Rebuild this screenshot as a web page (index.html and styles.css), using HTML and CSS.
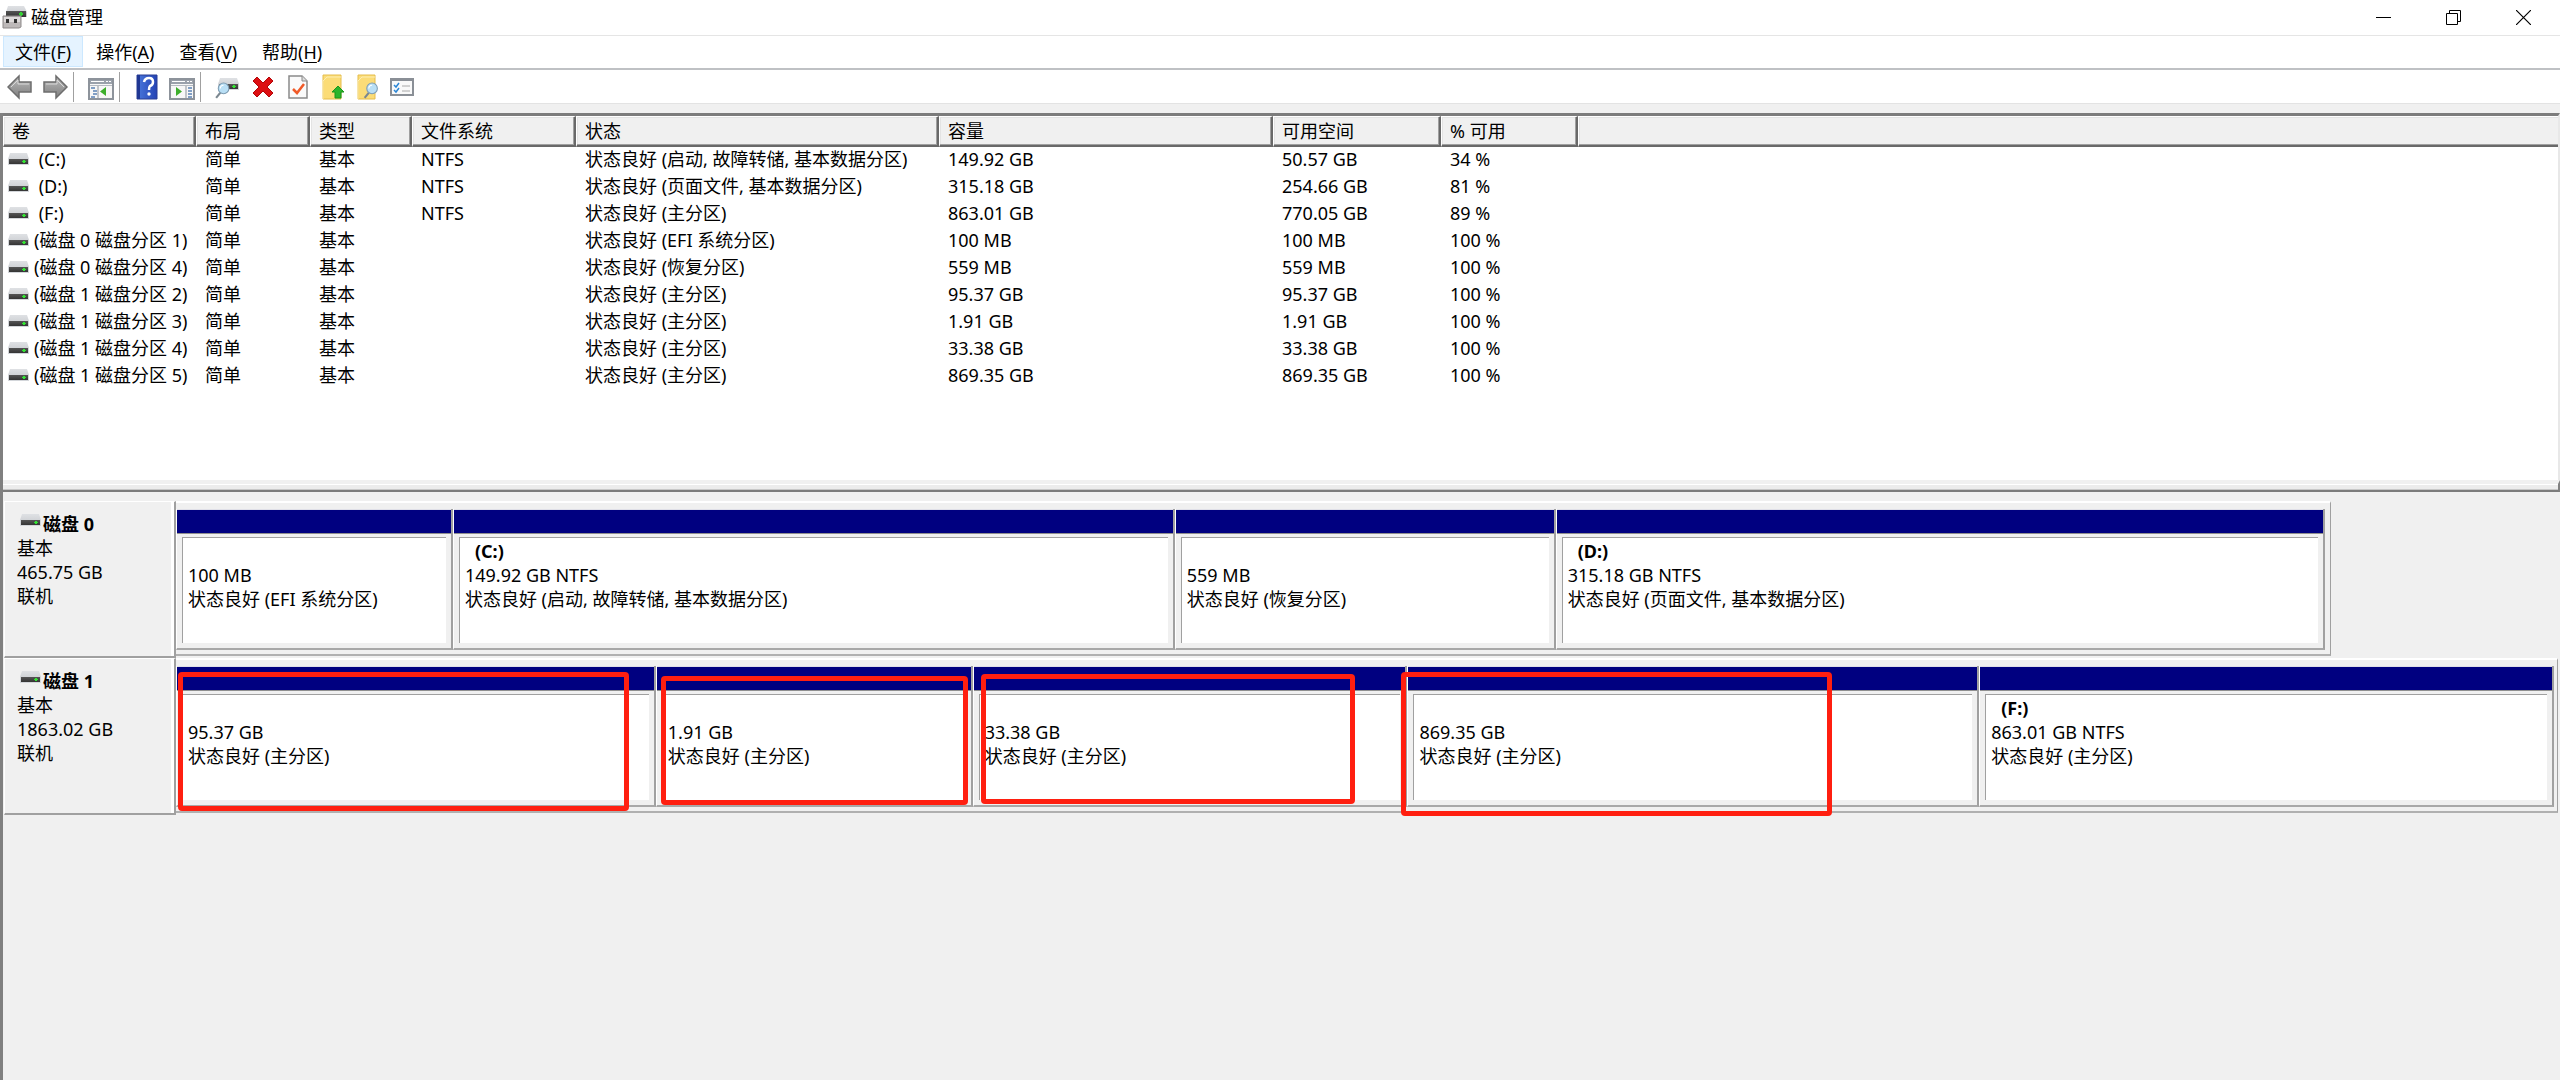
FILE: index.html
```html
<!DOCTYPE html>
<html lang="zh-CN">
<head>
    <meta charset="UTF-8">
    <meta name="viewport" content="width=device-width, initial-scale=1.0">
    <title>磁盘管理</title>
    <link rel="stylesheet" href="styles.css">
</head>
<body>
    <!-- Shared icons -->
    <svg class="sprite" aria-hidden="true">
        <defs>
            <linearGradient id="metal" x1="0" y1="0" x2="0" y2="1">
                <stop offset="0" stop-color="#dfe1e4"/>
                <stop offset="1" stop-color="#c3c6ca"/>
            </linearGradient>
            <linearGradient id="dark" x1="0" y1="0" x2="0" y2="1">
                <stop offset="0" stop-color="#555"/>
                <stop offset="1" stop-color="#343434"/>
            </linearGradient>
            <linearGradient id="arrow" x1="0" y1="0" x2="0" y2="1">
                <stop offset="0" stop-color="#bdbdbd"/>
                <stop offset="1" stop-color="#7d7d7d"/>
            </linearGradient>
            <linearGradient id="blue" x1="0" y1="0" x2="1" y2="0">
                <stop offset="0" stop-color="#4a78dc"/>
                <stop offset="1" stop-color="#2443b4"/>
            </linearGradient>
        </defs>
        <symbol id="drive" viewBox="0 0 21 13">
            <path d="M2 0h17l2 6v6H0V6z" fill="url(#metal)"/>
            <path d="M0 6h21v6H0z" fill="#d3d6da"/>
            <path d="M1 6h19v5H1z" fill="url(#dark)"/>
            <path d="M15 7h2v3h-2zM14 8h4v1h-4z" fill="#33e233"/>
        </symbol>
        <symbol id="lens" viewBox="0 0 14 16">
            <path d="M5 10l-4 5" stroke="#7b8790" stroke-width="2" fill="none"/>
            <circle cx="8" cy="6" r="5" fill="#b9dff5" stroke="#7f9db3"/>
            <path d="M5 6a3 3 0 0 1 3-3" stroke="#fff" fill="none"/>
        </symbol>
        <symbol id="panel" viewBox="0 0 26 22">
            <path d="M1 1h24v20H1z" fill="#f7f7f7" stroke="#8d939b" stroke-width="2"/>
            <path d="M2 2h22v4H2z" fill="#9aa1ab"/>
            <path d="M3 3h13v1H3zM18 3h2v1h-2zM21 3h2v1h-2z" fill="#fff"/>
            <path d="M2 7h22v1H2z" fill="#b5bac1"/>
        </symbol>
    </svg>

    <header class="titlebar">
        <svg class="app-icon" viewBox="0 0 25 24">
            <path d="M6 1h16l3 6v5H4V7z" fill="url(#metal)"/>
            <path d="M4 6h20v6H4z" fill="url(#dark)"/>
            <path d="M18 7h2v4h-2zM17 8h4v2h-4z" fill="#33d233"/>
            <path d="M1 11h18v11l-2 1H1z" fill="#bdb9b9" stroke="#8f8b8b"/>
            <path d="M2 12h16v5H2z" fill="#dedbdb"/>
            <path d="M4 14h3v4H4zM12 14h3v4h-3z" fill="#333"/>
        </svg>
        <h1>磁盘管理</h1>
        <div class="window-buttons">
            <button type="button" aria-label="最小化"><svg viewBox="0 0 15 15"><path d="M0 7.500h15" stroke="#000"/></svg></button>
            <button type="button" aria-label="还原"><svg viewBox="0 0 15 15"><path d="M.5 3.500h11v11H.5zM3.500 3.500v-3h11v11h-3" fill="none" stroke="#000"/></svg></button>
            <button type="button" aria-label="关闭"><svg viewBox="0 0 15 15"><path d="M0 0l15 15M15 0L0 15" stroke="#000" stroke-width="1.200"/></svg></button>
        </div>
    </header>

    <nav class="menubar">
        <button type="button" class="active">文件(<u>F</u>)</button>
        <button type="button">操作(<u>A</u>)</button>
        <button type="button">查看(<u>V</u>)</button>
        <button type="button">帮助(<u>H</u>)</button>
    </nav>

    <div class="toolbar">
        <button type="button" aria-label="后退"><svg viewBox="0 0 26 26"><path d="M1 13L12 2v6h12v10H12v6z" fill="url(#arrow)" stroke="#6d6d6d" stroke-width="1.500"/><path d="M4 13l7-7v4h11" fill="none" stroke="#d8d8d8"/></svg></button>
        <button type="button" aria-label="前进"><svg viewBox="0 0 26 26"><path d="M25 13L14 2v6H2v10h12v6z" fill="url(#arrow)" stroke="#6d6d6d" stroke-width="1.500"/><path d="M22 13l-7-7v4H4" fill="none" stroke="#d8d8d8"/></svg></button>
        <span class="separator"></span>
        <button type="button" aria-label="显示控制台树"><svg viewBox="0 0 26 26">
            <use href="#panel" x="0" y="4" width="26" height="22"/>
            <path d="M10 12v12" stroke="#8d939b"/>
            <path d="M3 14h4M5 17h4M5 20h4M3 23h4" stroke="#5b83b5" stroke-width="1.500"/>
            <path d="M18 13v9l-6-4.500z" fill="#3dae2b"/>
        </svg></button>
        <span class="separator"></span>
        <button type="button" aria-label="帮助"><svg viewBox="0 0 26 26">
            <path d="M3 1h20v24H3z" fill="url(#blue)" stroke="#2a3f94"/>
            <path d="M3 1h3v24H3z" fill="#1f3793"/>
            <path d="M10 8q1-4 5-4 4 0 4 4 0 3-3 4-1 1-1 4" fill="none" stroke="#fff" stroke-width="2.500"/>
            <circle cx="15" cy="20" r="1.700" fill="#fff"/>
        </svg></button>
        <button type="button" aria-label="显示操作窗格"><svg viewBox="0 0 26 26">
            <use href="#panel" x="0" y="4" width="26" height="22"/>
            <path d="M17 12v12" stroke="#8d939b"/>
            <path d="M19 14h4M19 17h4M19 20h4M19 23h4" stroke="#5b83b5" stroke-width="1.500"/>
            <path d="M7 13v9l6-4.500z" fill="#3dae2b"/>
        </svg></button>
        <span class="separator"></span>
        <button type="button" aria-label="重新扫描磁盘"><svg viewBox="0 0 26 26">
            <use href="#drive" x="3" y="4" width="21" height="13"/>
            <use href="#lens" x="0" y="8" width="15" height="17"/>
        </svg></button>
        <button type="button" aria-label="删除"><svg viewBox="0 0 26 26"><path d="M3 7l4-4 6 6 6-6 4 4-6 6 6 6-4 4-6-6-6 6-4-4 6-6z" fill="#dd0f12" stroke="#b30508"/></svg></button>
        <button type="button" aria-label="属性"><svg viewBox="0 0 26 26">
            <path d="M4 2h13l5 5v17H4z" fill="#fafafa" stroke="#8a8a8a" stroke-width="1.500"/>
            <path d="M17 2v5h5" fill="#ddd" stroke="#8a8a8a"/>
            <path d="M8 15l4 4 7-9" fill="none" stroke="#f05a28" stroke-width="2.500"/>
        </svg></button>
        <button type="button" aria-label="上移"><svg viewBox="0 0 26 26">
            <path d="M3 1h18v24H3z" fill="#fbdc77" stroke="#e5bd4c"/>
            <path d="M3 25V7l4-4h14" fill="none" stroke="#fdeeb2"/>
            <path d="M18 12l6 6h-3v6h-6v-6h-3z" fill="#2bb42b" stroke="#1b961b"/>
        </svg></button>
        <button type="button" aria-label="搜索"><svg viewBox="0 0 26 26">
            <path d="M3 1h17v24H3z" fill="#fbdc77" stroke="#e5bd4c"/>
            <path d="M3 25V7l4-4h13" fill="none" stroke="#fdeeb2"/>
            <use href="#lens" x="8" y="8" width="16" height="17"/>
        </svg></button>
        <button type="button" aria-label="选项列表"><svg viewBox="0 0 26 26">
            <path d="M1 5h22v16H1z" fill="#f9f9f9" stroke="#8a8f96" stroke-width="2"/>
            <path d="M0 4h24v3H0z" fill="#8a8f96"/>
            <path d="M4 11l2 2 3-4M4 16l2 2 3-4" fill="none" stroke="#2b86d6" stroke-width="1.500"/>
            <path d="M12 12h8M12 17h8" stroke="#a8a8a8"/>
        </svg></button>
    </div>

    <main class="workspace">
        <section class="volume-pane">
            <table class="volumes">
                <colgroup>
                    <col class="col-volume">
                    <col class="col-layout">
                    <col class="col-type">
                    <col class="col-fs">
                    <col class="col-status">
                    <col class="col-capacity">
                    <col class="col-free">
                    <col class="col-percent">
                    <col>
                </colgroup>
                <thead>
                    <tr><th>卷</th><th>布局</th><th>类型</th><th>文件系统</th><th>状态</th><th>容量</th><th>可用空间</th><th>% 可用</th><th></th></tr>
                </thead>
                <tbody>
                    <tr><td><svg class="drive"><use href="#drive"/></svg>&nbsp;(C:)</td><td>简单</td><td>基本</td><td>NTFS</td><td>状态良好 (启动, 故障转储, 基本数据分区)</td><td>149.92 GB</td><td>50.57 GB</td><td>34 %</td><td></td></tr>
                    <tr><td><svg class="drive"><use href="#drive"/></svg>&nbsp;(D:)</td><td>简单</td><td>基本</td><td>NTFS</td><td>状态良好 (页面文件, 基本数据分区)</td><td>315.18 GB</td><td>254.66 GB</td><td>81 %</td><td></td></tr>
                    <tr><td><svg class="drive"><use href="#drive"/></svg>&nbsp;(F:)</td><td>简单</td><td>基本</td><td>NTFS</td><td>状态良好 (主分区)</td><td>863.01 GB</td><td>770.05 GB</td><td>89 %</td><td></td></tr>
                    <tr><td><svg class="drive"><use href="#drive"/></svg>(磁盘 0 磁盘分区 1)</td><td>简单</td><td>基本</td><td></td><td>状态良好 (EFI 系统分区)</td><td>100 MB</td><td>100 MB</td><td>100 %</td><td></td></tr>
                    <tr><td><svg class="drive"><use href="#drive"/></svg>(磁盘 0 磁盘分区 4)</td><td>简单</td><td>基本</td><td></td><td>状态良好 (恢复分区)</td><td>559 MB</td><td>559 MB</td><td>100 %</td><td></td></tr>
                    <tr><td><svg class="drive"><use href="#drive"/></svg>(磁盘 1 磁盘分区 2)</td><td>简单</td><td>基本</td><td></td><td>状态良好 (主分区)</td><td>95.37 GB</td><td>95.37 GB</td><td>100 %</td><td></td></tr>
                    <tr><td><svg class="drive"><use href="#drive"/></svg>(磁盘 1 磁盘分区 3)</td><td>简单</td><td>基本</td><td></td><td>状态良好 (主分区)</td><td>1.91 GB</td><td>1.91 GB</td><td>100 %</td><td></td></tr>
                    <tr><td><svg class="drive"><use href="#drive"/></svg>(磁盘 1 磁盘分区 4)</td><td>简单</td><td>基本</td><td></td><td>状态良好 (主分区)</td><td>33.38 GB</td><td>33.38 GB</td><td>100 %</td><td></td></tr>
                    <tr><td><svg class="drive"><use href="#drive"/></svg>(磁盘 1 磁盘分区 5)</td><td>简单</td><td>基本</td><td></td><td>状态良好 (主分区)</td><td>869.35 GB</td><td>869.35 GB</td><td>100 %</td><td></td></tr>
                </tbody>
            </table>
        </section>

        <div class="splitter"></div>

        <section class="disk-pane">
            <div class="disk">
                <div class="disk-label">
                    <h2><svg class="drive"><use href="#drive"/></svg>磁盘 0</h2>
                    <p>基本</p>
                    <p>465.75 GB</p>
                    <p>联机</p>
                </div>
                <div class="disk-map map-0">
                    <div class="partition">
                        <div class="info"><h3></h3><p>100 MB</p><p>状态良好 (EFI 系统分区)</p></div>
                    </div>
                    <div class="partition">
                        <div class="info"><h3>(C:)</h3><p>149.92 GB NTFS</p><p>状态良好 (启动, 故障转储, 基本数据分区)</p></div>
                    </div>
                    <div class="partition">
                        <div class="info"><h3></h3><p>559 MB</p><p>状态良好 (恢复分区)</p></div>
                    </div>
                    <div class="partition">
                        <div class="info"><h3>(D:)</h3><p>315.18 GB NTFS</p><p>状态良好 (页面文件, 基本数据分区)</p></div>
                    </div>
                </div>
            </div>
            <div class="disk">
                <div class="disk-label">
                    <h2><svg class="drive"><use href="#drive"/></svg>磁盘 1</h2>
                    <p>基本</p>
                    <p>1863.02 GB</p>
                    <p>联机</p>
                </div>
                <div class="disk-map map-1">
                    <div class="partition">
                        <div class="info"><h3></h3><p>95.37 GB</p><p>状态良好 (主分区)</p></div>
                        <span class="mark mark-a"></span>
                    </div>
                    <div class="partition">
                        <div class="info"><h3></h3><p>1.91 GB</p><p>状态良好 (主分区)</p></div>
                        <span class="mark mark-b"></span>
                    </div>
                    <div class="partition">
                        <div class="info"><h3></h3><p>33.38 GB</p><p>状态良好 (主分区)</p></div>
                        <span class="mark mark-c"></span>
                    </div>
                    <div class="partition">
                        <div class="info"><h3></h3><p>869.35 GB</p><p>状态良好 (主分区)</p></div>
                        <span class="mark mark-d"></span>
                    </div>
                    <div class="partition">
                        <div class="info"><h3>(F:)</h3><p>863.01 GB NTFS</p><p>状态良好 (主分区)</p></div>
                    </div>
                </div>
            </div>
        </section>
    </main>
</body>
</html>
```
FILE: styles.css
```css
* {
    box-sizing: border-box;
}
body {
    margin: 0;
    min-height: 100vh;
    display: flex;
    flex-direction: column;
    background: #f0f0f0;
    color: #000;
    font-family: "Noto Sans", "Noto Sans CJK SC", sans-serif;
    font-size: 18px;
    line-height: 24px;
}
h1, h2, h3, p {
    margin: 0;
    font-size: 18px;
}
button {
    border: none;
    padding: 0;
    background: transparent;
    color: inherit;
    font: inherit;
}
.sprite {
    position: absolute;
    width: 0;
    height: 0;
}

/* Title bar */
.titlebar {
    display: flex;
    align-items: center;
    height: 36px;
    padding: 0 2px 1px;
    background: #fff;
    border-bottom: 1px solid #e5e5e5;
}
.titlebar h1 {
    flex: 1;
    margin-left: 4px;
    font-weight: normal;
}
.app-icon {
    width: 25px;
    height: 24px;
}
.window-buttons {
    display: flex;
}
.window-buttons button {
    width: 70px;
    height: 33px;
}
.window-buttons svg {
    display: block;
    width: 15px;
    height: 15px;
    margin: 0 auto;
}

/* Menu */
.menubar {
    display: flex;
    gap: 1px;
    height: 34px;
    padding: 0 3px 1px;
    background: #fff;
    border-bottom: 2px solid #bfc1c4;
}
.menubar button {
    padding: 0 11px;
    border: 1px solid transparent;
}
.menubar .active {
    background: #e5f3ff;
    border-color: #cce8ff;
}
.menubar u {
    text-underline-offset: 3px;
}

/* Toolbar */
.toolbar {
    display: flex;
    align-items: center;
    height: 34px;
    padding: 1px 0 0 2px;
    background: #fff;
    border-bottom: 1px solid #e3e3e3;
}
.toolbar button {
    width: 35px;
    height: 26px;
}
.toolbar svg {
    display: block;
    width: 26px;
    height: 26px;
    margin: 0 auto;
}
.separator {
    width: 1px;
    height: 30px;
    margin: 0 9px 0 1px;
    background: #a0a0a0;
}

/* Panes */
.workspace {
    flex: 1;
    display: flex;
    flex-direction: column;
    margin-top: 9px;
    border-left: 3px solid #808080;
}
.volume-pane {
    min-height: 367px;
    background: #fff;
    border-top: 3px solid #7c7c7c;
    border-right: 2px solid #e8e8e8;
}
.volumes {
    width: 100%;
    table-layout: fixed;
    border-collapse: separate;
    border-spacing: 0;
}
.col-volume {
    width: 193px;
}
.col-layout {
    width: 114px;
}
.col-type {
    width: 102px;
}
.col-fs {
    width: 164px;
}
.col-status {
    width: 363px;
}
.col-capacity {
    width: 334px;
}
.col-free {
    width: 168px;
}
.col-percent {
    width: 137px;
}
.volumes th {
    height: 31px;
    padding: 0 0 0 8px;
    background: #f0f0f0;
    border: solid;
    border-width: 1px 2px 2px 1px;
    border-color: #fff #696969 #696969 #fff;
    box-shadow: inset -1px -1px #a0a0a0, inset 1px 1px #e3e3e3;
    font-weight: normal;
    text-align: left;
}
.volumes th:last-child {
    border-right: none;
    box-shadow: inset 0 -1px #a0a0a0, inset 1px 1px #e3e3e3;
}
.volumes td {
    height: 27px;
    padding: 0 0 3px 9px;
    white-space: nowrap;
}
.volumes td:first-child {
    padding-left: 5px;
}
.drive {
    width: 21px;
    height: 13px;
    margin-right: 5px;
}
.splitter {
    height: 12px;
    border-top: 4px solid #f0f0f0;
    border-right: 2px solid #808080;
    border-bottom: 2px solid #7c7c7c;
    background: #ececec;
    box-shadow: inset 0 1px #fff, inset 0 -1px #c8c8c8;
}

/* Disks */
.disk-pane {
    padding: 9px 2px 0 1px;
}
.disk {
    display: flex;
    height: 157px;
}
.disk-label {
    width: 172px;
    padding: 10px 0 0 12px;
    border: solid;
    border-width: 1px 2px 2px 1px;
    border-color: #fff #a0a0a0 #a0a0a0 #fff;
    box-shadow: inset -3px 0 #fff;
}
.disk-label .drive {
    margin: 0 2px 4px 3px;
}
.disk-map {
    display: grid;
    height: 155px;
    padding: 6px 5px 4px 0;
    border-top: 2px solid #fff;
    border-right: 1px solid #a0a0a0;
    border-bottom: 2px solid #b0b0b0;
}
.map-0 {
    width: calc((100% - 172px) * 0.9045);
    grid-template-columns: 277fr 722fr 381fr 769fr;
}
.map-1 {
    flex: 1;
    padding-right: 3px;
    grid-template-columns: 480fr 317fr 435fr 572fr 575fr;
}
.partition {
    position: relative;
    display: flex;
    flex-direction: column;
    padding-right: 5px;
    border-left: 1px solid #fff;
    border-right: 2px solid #a0a0a0;
    border-bottom: 2px solid #a8a8a8;
}
/* navy strip above each partition */
.partition::before {
    content: "";
    height: 23px;
    margin-right: -5px;
    background: #000080;
    border-top: 1px solid #e0e0e8;
    border-bottom: 1px solid #909090;
}
.info {
    flex: 1;
    margin: 3px 0 5px 5px;
    padding: 1px 0 0 5px;
    background: #fff;
    border-top: 1px solid #a0a0a0;
    border-left: 1px solid #a0a0a0;
    white-space: nowrap;
}
.info h3 {
    height: 24px;
    padding-left: 10px;
}

/* Red highlight frames */
.mark {
    position: absolute;
    z-index: 1;
    border: 5px solid #ff1f10;
    border-radius: 4px;
}
.mark-a {
    top: 6px;
    right: 25px;
    bottom: -6px;
    left: 1px;
}
.mark-b {
    top: 10px;
    right: 3px;
    bottom: 0;
    left: 4px;
}
.mark-c {
    top: 8px;
    right: 50px;
    bottom: 1px;
    left: 7px;
}
.mark-d {
    top: 6px;
    right: 145px;
    bottom: -11px;
    left: -7px;
}
```
